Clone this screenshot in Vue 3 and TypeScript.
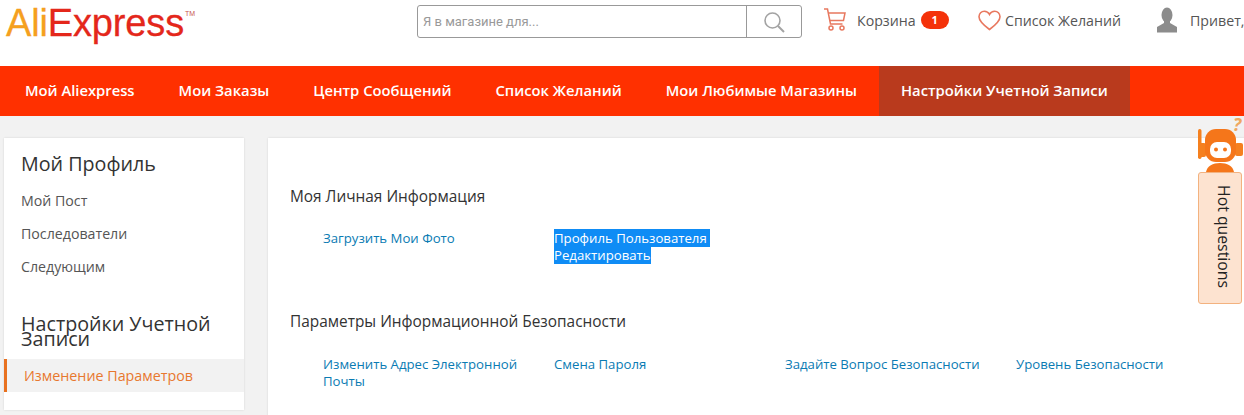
<script setup lang="ts">
const navItems: string[] = ['Мой Aliexpress', 'Мои Заказы', 'Центр Сообщений', 'Список Желаний', 'Мои Любимые Магазины']
const sideLinks: string[] = ['Мой Пост', 'Последователи', 'Следующим']
const securityLinks: string[] = ['Изменить Адрес Электронной Почты', 'Смена Пароля', 'Задайте Вопрос Безопасности', 'Уровень Безопасности']
</script>

<template>
  <div class="page">
    <header class="top">
      <div class="logo"><span class="ali">Ali</span><span class="express">Express</span><span class="tm">TM</span></div>
      <div class="search">
        <div class="search-input">Я в магазине для...</div>
        <div class="search-btn">
          <svg width="24" height="24" viewBox="0 0 24 24" fill="none" stroke="#a3a3a3" stroke-width="1.6">
            <circle cx="10.5" cy="10.5" r="7.5" />
            <path d="M16 16l6 6" stroke-width="2" />
          </svg>
        </div>
      </div>
      <div class="cart">
        <svg width="24" height="26" viewBox="0 0 24 26" fill="none" stroke="#e8785f" stroke-width="1.5">
          <path d="M1 2h3.5l3 15h12" />
          <path d="M5 6h17l-1.5 7.5H6.5" />
          <circle cx="8" cy="21" r="2" />
          <circle cx="19" cy="21" r="2" />
        </svg>
        <span class="label">Корзина</span>
        <span class="badge">1</span>
      </div>
      <div class="wish">
        <svg width="23" height="21" viewBox="0 0 23 21" fill="none" stroke="#e8785f" stroke-width="1.6">
          <path d="M11.5 19.5C6 15.5 1 11.5 1 6.8 1 3.5 3.500 1.200 6.300 1.200c2.200 0 4.200 1.200 5.200 3.200 1-2 3-3.200 5.200-3.200C19.500 1.200 22 3.500 22 6.800c0 4.700-5 8.700-10.500 12.700z" />
        </svg>
        <span class="label">Список Желаний</span>
      </div>
      <div class="user">
        <svg width="26" height="26" viewBox="0 0 26 26" fill="#8c8c8c">
          <ellipse cx="13" cy="8" rx="5.500" ry="7.500" />
          <path d="M10 13h6v3l7 4v5.500H3V20l7-4z" />
        </svg>
        <span class="label">Привет,</span>
      </div>
    </header>

    <nav class="nav">
      <a v-for="item in navItems" :key="item" class="nav-item">{{ item }}</a>
      <a class="nav-item active">Настройки Учетной Записи</a>
    </nav>

    <div class="body">
      <aside class="side">
        <h3 class="side-title">Мой Профиль</h3>
        <ul class="side-list">
          <li v-for="link in sideLinks" :key="link">{{ link }}</li>
        </ul>
        <h3 class="side-title second">Настройки Учетной Записи</h3>
        <div class="side-active">Изменение Параметров</div>
      </aside>

      <main class="main">
        <section class="group">
          <h4 class="group-title">Моя Личная Информация</h4>
          <div class="links">
            <a class="link">Загрузить Мои Фото</a>
            <a class="link selected"><span>Профиль Пользователя&nbsp;<br />Редактировать</span></a>
          </div>
        </section>
        <section class="group">
          <h4 class="group-title">Параметры Информационной Безопасности</h4>
          <div class="links">
            <a v-for="link in securityLinks" :key="link" class="link">{{ link }}</a>
          </div>
        </section>
      </main>
    </div>

    <div class="helper">
      <svg class="robot" width="46" height="64" viewBox="0 0 46 64">
        <text x="35" y="23" class="q">?</text>
        <g transform="translate(0 7)">
          <rect x="0" y="14" width="3.500" height="30" rx="1.700" fill="#f5801f" />
          <rect x="1" y="28" width="7" height="14" rx="2" fill="#f5801f" />
          <rect x="37" y="28" width="8" height="13" rx="2" fill="#f5801f" />
          <rect x="7" y="14" width="31" height="33" rx="11" fill="#f5761a" />
          <rect x="12" y="27" width="21" height="16" rx="7" fill="#fff" />
          <circle cx="18" cy="34.500" r="2" fill="#f5761a" />
          <circle cx="27" cy="34.500" r="2" fill="#f5761a" />
          <path d="M8 57c1-6 7-9 14-9s13 3 14 9z" fill="#f5761a" />
        </g>
      </svg>
      <div class="hot">Hot questions</div>
    </div>
  </div>
</template>

<style>
html, body { margin: 0; padding: 0; overflow: hidden; background: #f2f2f2; }
</style>

<style scoped>
.page {
  position: relative;
  width: 1244px;
  height: 415px;
  overflow: hidden;
  background: #f2f2f2;
  font-family: "Open Sans", "Noto Sans", sans-serif;
  color: #333;
}
.top {
  position: relative;
  height: 66px;
  background: #fff;
  display: flex;
  align-items: flex-start;
}
.logo {
  width: 417px;
  flex: none;
  padding-left: 6px;
  box-sizing: border-box;
  height: 50px;
  display: flex;
  align-items: flex-start;
  font-family: "Liberation Sans", sans-serif;
  font-size: 38px;
  line-height: 46px;
  letter-spacing: -0.150px;
  -webkit-text-stroke: 0.3px currentColor;
}
.ali { color: #f5a01f; }
.express { color: #e4271b; }
.tm { font-size: 7px; line-height: 9px; margin: 9px 0 0 1px; letter-spacing: 0; color: #c9584d; -webkit-text-stroke: 0; }
.search {
  margin-top: 5px;
  width: 385px;
  height: 33px;
  box-sizing: border-box;
  border: 1px solid #999;
  border-radius: 3px;
  display: flex;
  flex: none;
}
.search-input {
  flex: 1;
  padding-left: 5px;
  font-family: Roboto, sans-serif;
  font-size: 13px;
  line-height: 31px;
  color: #999;
}
.search-btn {
  width: 54px;
  border-left: 1px solid #999;
  display: flex;
  align-items: center;
  justify-content: center;
}
.label { font-size: 14.200px; color: #555; white-space: nowrap; }
.cart, .wish, .user { display: flex; align-items: center; height: 40px; flex: none; }
.cart { margin-left: 21px; width: 155px; }
.cart .label { margin-left: 10px; }
.badge {
  margin-left: 5px;
  width: 28px;
  height: 18px;
  border-radius: 9px;
  background: #f4320a;
  color: #fff;
  font-size: 11px;
  font-weight: 700;
  line-height: 18px;
  text-align: center;
}
.wish { width: 176px; }
.wish .label { margin-left: 4px; }
.user .label { margin-left: 10px; }
.nav {
  height: 50px;
  background: #ff3000;
  display: flex;
  padding-left: 3px;
}
.nav-item {
  padding: 0 22px;
  line-height: 49px;
  color: #fff;
  font-size: 14.780px;
  font-weight: 600;
  white-space: nowrap;
}
.nav-item.active { background: #b93a1d; }
.body {
  display: flex;
  align-items: flex-start;
  padding: 22px 0 0 4px;
  gap: 24px;
}
.side {
  width: 240px;
  height: 272px;
  flex: none;
  box-sizing: border-box;
  background: #fff;
  box-shadow: 0 0 2px rgba(0, 0, 0, .12);
  padding-top: 14px;
}
.side-title {
  margin: 0;
  padding: 4px 12px 0 17px;
  font-size: 19.700px;
  font-weight: 400;
  line-height: 15px;
  color: #333;
}
.side-list {
  list-style: none;
  margin: 13px 0 0;
  padding: 0 0 0 17px;
  font-size: 14.200px;
  color: #555;
}
.side-list li { height: 33px; line-height: 33px; }
.side-title.second { margin-top: 29px; }
.side-active {
  margin-top: 13px;
  height: 33px;
  line-height: 33px;
  background: #f2f2f2;
  border-left: 3px solid #e8711f;
  padding-left: 17px;
  color: #e8782f;
  font-size: 14.300px;
}
.main {
  flex: 1;
  height: 300px;
  background: #fff;
  box-shadow: 0 0 2px rgba(0, 0, 0, .12);
  padding: 49px 0 0 22px;
  box-sizing: border-box;
}
.group-title {
  margin: 0;
  font-size: 15.400px;
  font-weight: 400;
  line-height: 19px;
  color: #333;
}
.group { height: 125px; }
.group + .group .links { margin-top: 25px; }
.links {
  display: flex;
  margin-top: 24px;
  padding-left: 33px;
}
.link {
  width: 198px;
  margin-right: 33px;
  flex: none;
  font-size: 13.200px;
  line-height: 17px;
  color: #0a7bb3;
}
.selected { color: #fff; width: 160px; margin-right: 71px; }
.selected span { background: #0f8cf5; }
.helper {
  position: absolute;
  left: 1198px;
  top: 108px;
  width: 46px;
}
.robot { display: block; }
.q { font-size: 18px; font-weight: 700; font-style: italic; fill: #f0a860; font-family: "Open Sans", sans-serif; }
.hot {
  box-sizing: border-box;
  width: 44px;
  height: 132px;
  background: #fde3d0;
  border: 1px solid #f3b27f;
  border-radius: 3px;
  writing-mode: vertical-rl;
  padding-top: 12px;
  font-size: 15.800px;
  line-height: 34px;
  color: #222;
}
</style>
